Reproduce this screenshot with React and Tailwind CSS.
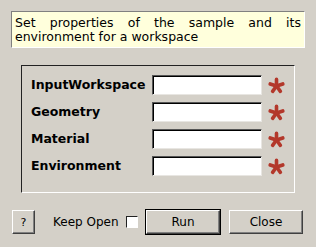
const FIELDS = ["InputWorkspace", "Geometry", "Material", "Environment"];

function Star() {
  const arms = [-90, -18, 54, 126, 198];
  return (
    <svg width="17" height="17" viewBox="0 0 17 17">
      {arms.map((a) => {
        const r = (a * Math.PI) / 180;
        return (
          <line
            key={a}
            x1="8.5"
            y1="9"
            x2={8.5 + Math.cos(r) * 6.6}
            y2={9 + Math.sin(r) * 6.6}
            stroke="#b3382b"
            strokeWidth="3.6"
            strokeLinecap="round"
          />
        );
      })}
    </svg>
  );
}

function Field({ label }) {
  return (
    <div className="flex items-center h-[20px]">
      <span className="w-[121px] font-bold text-[12.5px] leading-none text-black whitespace-nowrap">{label}</span>
      <div className="w-[110px] h-[20px] bg-white border border-t-[#555] border-l-[#555] border-b-[#e8e6e2] border-r-[#e8e6e2] shadow-[inset_1px_1px_0_#000]" />
      <div className="ml-[6px] flex items-center">
        <Star />
      </div>
    </div>
  );
}

export default function App() {
  return (
    <div
      className="w-[316px] h-[247px] bg-[#d4d0c8] flex flex-col pt-[11px] px-[11px] text-black"
      style={{ fontFamily: '"DejaVu Sans", sans-serif' }}
    >
      <div className="w-[294px] h-[37px] bg-[#ffffdc] border border-t-[#808080] border-l-[#808080] border-b-white border-r-white px-[3px] pt-[4px] text-[12.5px] leading-[14px] text-justify">
        Set properties of the sample and its environment for a workspace
      </div>

      <div className="mt-[17px] ml-[10px] w-[274px] h-[128px] border border-t-[#222] border-l-[#222] border-b-white border-r-white pt-[9px] pl-[9px] flex flex-col gap-[7px]">
        {FIELDS.map((f) => (
          <Field key={f} label={f} />
        ))}
      </div>

      <div className="mt-[16px] flex items-center h-[26px] text-[12px] whitespace-nowrap">
        <button className="shrink-0 ml-[1px] w-[23px] h-[24px] border border-t-white border-l-white border-b-[#404040] border-r-[#404040] shadow-[inset_-1px_-1px_0_#808080] text-[11px] leading-none">
          ?
        </button>
        <span className="ml-[18px] w-[67px] shrink-0">Keep Open</span>
        <div className="shrink-0 ml-[6px] w-[12px] h-[12px] bg-white border border-t-[#222] border-l-[#222] border-b-white border-r-white" />
        <button className="shrink-0 ml-[7px] w-[76px] h-[26px] border border-black bg-[#d4d0c8] flex">
          <span className="flex-1 flex items-center justify-center border border-t-white border-l-white border-b-[#404040] border-r-[#404040] shadow-[inset_-1px_-1px_0_#808080]">
            Run
          </span>
        </button>
        <button className="shrink-0 ml-[8px] w-[74px] h-[24px] border border-t-white border-l-white border-b-[#404040] border-r-[#404040] shadow-[inset_-1px_-1px_0_#808080]">
          Close
        </button>
      </div>
    </div>
  );
}
